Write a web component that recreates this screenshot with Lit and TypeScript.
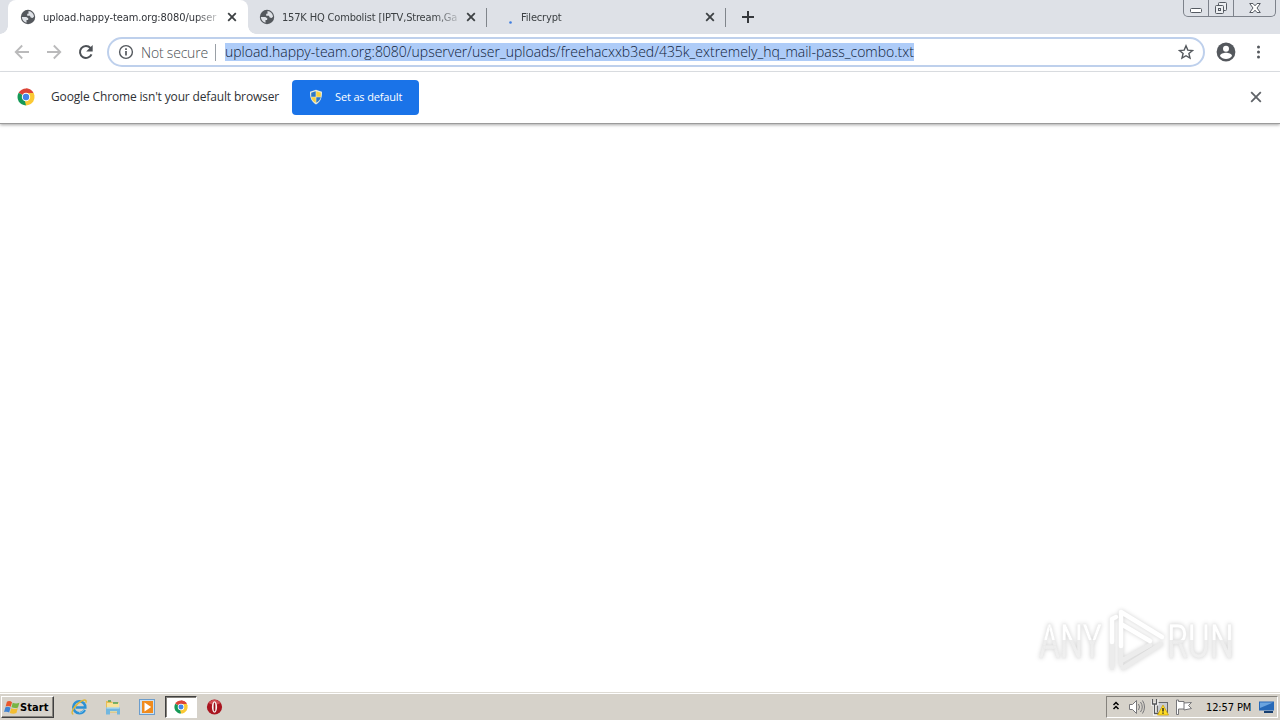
import { LitElement, css, html, svg } from "lit";
import { customElement, property } from "lit/decorators.js";
import { classMap } from "lit/directives/class-map.js";

const globe = html`
  <svg width="16" height="16" viewBox="0 0 16 16">
    <circle cx="8" cy="8" r="7.2" fill="#54585d" />
    <path d="M1.800 8h4.500l2 1.300-.2 1.700H6.500v2.800C4 13 2 11 1.800 8z" fill="#dfe2e7" />
    <path d="M8.500 2c3 .3 5.300 2.700 5.500 5.700l-1.500 1.200-1.800-.5-.8-1.700H7.200V4.800h1.300z" fill="#dfe2e7" />
  </svg>
`;

const cross = html`
  <svg width="10" height="10" viewBox="0 0 10 10">
    <path d="M1.200 1.200l7.600 7.600M8.800 1.200l-7.600 7.600" stroke="#3c4043" stroke-width="1.800" />
  </svg>
`;

const chrome = html`
  <svg width="18" height="18" viewBox="0 0 18 18">
    <path d="M9 9L1.640 4.750A8.500 8.500 0 0 1 16.360 4.750z" fill="#dc4437" />
    <path d="M9 9V.5A8.500 8.500 0 0 1 16.360 4.750H9z" fill="#dc4437" />
    <path d="M9 9L16.360 4.750A8.500 8.500 0 0 1 9 17.500z" fill="#fbc934" />
    <path d="M9 9V17.500A8.500 8.500 0 0 1 1.640 4.750z" fill="#159957" />
    <path d="M9 5h7.500l.8 2.500L12.500 11 9 17.500l-1-4z" fill="#fbc934" />
    <circle cx="9" cy="9" r="4.200" fill="#fff" />
    <circle cx="9" cy="9" r="3.200" fill="#4285e8" />
  </svg>
`;

@customElement("browser-tab")
export class BrowserTab extends LitElement {
  @property() label = "";
  @property({ type: Boolean }) active = false;
  @property({ type: Boolean }) loading = false;

  static styles = css`
    :host {
      display: block;
      height: 34px;
    }
    .tab {
      position: relative;
      display: flex;
      align-items: center;
      box-sizing: border-box;
      height: 34px;
      width: 239px;
      padding-left: 11px;
      color: #3c4043;
      font: 11px "DejaVu Sans Condensed", "DejaVu Sans", sans-serif;
      font-stretch: condensed;
      border-right: 1px solid transparent;
    }
    .tab.active {
      width: 240px;
      padding-left: 12px;
      background: #fff;
      border-radius: 8px 8px 0 0;
      color: #303338;
    }
    .tab.active::before,
    .tab.active::after {
      content: "";
      position: absolute;
      bottom: 0;
      width: 8px;
      height: 8px;
    }
    .tab.active::before {
      left: -8px;
      background: radial-gradient(circle at 0 0, transparent 7.5px, #fff 8px);
    }
    .tab.active::after {
      right: -9px;
      background: radial-gradient(circle at 100% 0, transparent 7.5px, #fff 8px);
    }
    .icon {
      width: 16px;
      height: 16px;
      margin-right: 7px;
    }
    .icon svg {
      display: block;
    }
    .label {
      width: 175px;
      height: 18px;
      line-height: 19px;
      margin-right: 9px;
      overflow: hidden;
      white-space: nowrap;
      letter-spacing: -0.17px;
      -webkit-mask-image: linear-gradient(90deg, #000 152px, transparent 182px);
    }
    .active .label {
      letter-spacing: -0.08px;
    }
    .close {
      display: flex;
    }
    .divider {
      position: absolute;
      right: -1px;
      top: 8px;
      width: 1px;
      height: 19px;
      background: #80858b;
    }
  `;

  render() {
    return html`
      <div class=${classMap({ tab: true, active: this.active })}>
        <div class="icon">
          ${this.loading
            ? html`<svg width="16" height="16"><circle cx="12.500" cy="13.500" r="1.300" fill="#3f7de0" /></svg>`
            : globe}
        </div>
        <div class="label">${this.label}</div>
        <div class="close">${cross}</div>
        ${this.active ? "" : html`<div class="divider"></div>`}
      </div>
    `;
  }
}

@customElement("window-buttons")
export class WindowButtons extends LitElement {
  static styles = css`
    :host {
      display: block;
    }
    .buttons {
      display: flex;
      box-sizing: border-box;
      width: 93px;
      height: 17px;
      border: 1px solid #7d828b;
      border-top: 0;
      border-radius: 0 0 5px 5px;
    }
    .button {
      display: flex;
      align-items: center;
      justify-content: center;
      width: 24px;
      border-right: 1px solid #7d828b;
    }
    .button:last-child {
      flex: 1;
      border-right: 0;
    }
  `;

  render() {
    return html`
      <div class="buttons">
        <div class="button">
          <svg width="12" height="16"><rect x=".5" y="8.500" width="11" height="4" rx="1" fill="#fff" stroke="#555a62" /></svg>
        </div>
        <div class="button">
          <svg width="14" height="14" fill="#eceef1" stroke="#555a62">
            <rect x="4.500" y="1.500" width="8" height="8" rx="1" />
            <rect x="1.500" y="4.500" width="8" height="8" rx="1" />
            <rect x="4.500" y="7.500" width="2" height="2" />
          </svg>
        </div>
        <div class="button">
          <svg width="12" height="12" viewBox="0 0 12 12">
            <path d="M.7 1.500h3.300L6 3.800l2-2.300h3.300L8 6l3.300 4.500H8L6 8.200l-2 2.300H.7L4 6z" fill="#fff" stroke="#555a62" />
          </svg>
        </div>
      </div>
    `;
  }
}

@customElement("address-toolbar")
export class AddressToolbar extends LitElement {
  static styles = css`
    .toolbar {
      display: flex;
      align-items: center;
      box-sizing: border-box;
      height: 38px;
      padding: 0 14px 1px;
      background: #fff;
      border-bottom: 1px solid #dcdfe3;
    }
    .nav {
      display: flex;
      gap: 16px;
      margin-right: 13px;
    }
    .omnibox {
      display: flex;
      align-items: center;
      box-sizing: border-box;
      width: 1098px;
      height: 30px;
      padding: 0 9px;
      border: 2px solid #bed0ec;
      border-radius: 15px;
      font: 14px "Open Sans", "Noto Sans", sans-serif;
      font-weight: 300;
      white-space: nowrap;
    }
    .info {
      display: flex;
      margin-right: 7px;
    }
    .state {
      width: 74px;
      line-height: 17px;
      color: #4b4f54;
      letter-spacing: -0.2px;
    }
    .bar {
      width: 1px;
      height: 17px;
      margin-right: 9px;
      background: #9aa0a6;
    }
    .url {
      height: 18px;
      line-height: 17px;
      background: #aeccf8;
      color: #101c38;
      letter-spacing: -0.01px;
    }
    .star {
      display: flex;
      margin-left: auto;
    }
    .profile {
      display: flex;
      margin: 0 20px 0 11px;
    }
  `;

  render() {
    return html`
      <div class="toolbar">
        <div class="nav">
          <svg width="16" height="16" fill="none" stroke="#bababb" stroke-width="1.800">
            <path d="M15 8H2M8.200 1.500L1.700 8l6.500 6.500" />
          </svg>
          <svg width="16" height="16" fill="none" stroke="#bababb" stroke-width="1.800">
            <path d="M1 8h13M7.800 1.500L14.300 8l-6.500 6.500" />
          </svg>
          <svg width="16" height="16">
            <path d="M13.500 10.300A6 6 0 1 1 12.500 4l1 1" fill="none" stroke="#4d5156" stroke-width="2" />
            <path d="M14.700 1v6.500H8.200z" fill="#4d5156" />
          </svg>
        </div>
        <div class="omnibox">
          <div class="info">
            <svg width="16" height="16">
              <circle cx="8" cy="8" r="6.400" fill="none" stroke="#54585d" stroke-width="1.400" />
              <path d="M8 7v4.500M8 4.300v1.700" stroke="#54585d" stroke-width="1.700" />
            </svg>
          </div>
          <div class="state">Not secure</div>
          <div class="bar"></div>
          <div class="url">upload.happy-team.org:8080/upserver/user_uploads/freehacxxb3ed/435k_extremely_hq_mail-pass_combo.txt</div>
          <div class="star">
            <svg width="16" height="16">
              <path
                d="M8 1.800l1.800 4.300 4.700.4-3.600 3 1.100 4.600L8 11.700l-4 2.400 1.100-4.600-3.600-3 4.700-.4z"
                fill="none"
                stroke="#54585d"
                stroke-width="1.400"
              />
            </svg>
          </div>
        </div>
        <div class="profile">
          <svg width="20" height="20">
            <circle cx="10" cy="10" r="9.400" fill="#54585d" />
            <circle cx="10" cy="6.700" r="3" fill="#fff" />
            <path d="M4 14c0-2.300 3.700-3.300 6-3.300s6 1 6 3.300c-1.300 1.900-3.500 3-6 3s-4.700-1.100-6-3z" fill="#fff" />
          </svg>
        </div>
        <svg width="4" height="16" fill="#54585d">
          <circle cx="2.500" cy="3" r="1.500" />
          <circle cx="2.500" cy="8" r="1.500" />
          <circle cx="2.500" cy="13" r="1.500" />
        </svg>
      </div>
    `;
  }
}

@customElement("default-infobar")
export class DefaultInfobar extends LitElement {
  static styles = css`
    .infobar {
      display: flex;
      align-items: center;
      box-sizing: border-box;
      height: 51px;
      padding: 0 18px 1px 17px;
      background: #fff;
      box-shadow: 0 1px 0 #9b9b9b, 0 2px 3px rgba(0, 0, 0, 0.35);
      font: 12px "Open Sans", "Noto Sans", sans-serif;
      color: #2f3236;
      white-space: nowrap;
    }
    .logo {
      display: flex;
      margin-right: 16px;
    }
    .message {
      width: 241px;
      padding-bottom: 1px;
      letter-spacing: -0.15px;
    }
    .default {
      display: flex;
      align-items: center;
      box-sizing: border-box;
      width: 127px;
      height: 35px;
      margin-top: 1px;
      padding: 0 0 1px 16px;
      gap: 11px;
      border-radius: 4px;
      background: #1a73e8;
      color: #fff;
      font-size: 11px;
      letter-spacing: -0.15px;
    }
    .default span {
      padding-bottom: 2px;
    }
    .close {
      display: flex;
      margin-left: auto;
    }
  `;

  render() {
    return html`
      <div class="infobar">
        <div class="logo">${chrome}</div>
        <div class="message">Google Chrome isn't your default browser</div>
        <div class="default">
          <svg width="16" height="16">
            <path d="M8 .8l6 2C14.300 9 12.300 13 8 15.400 3.700 13 1.700 9 2 2.800z" fill="#e5e9dc" />
            <path d="M7.700 2.200v5.600H3.200V3.700z" fill="#2d78c5" />
            <path d="M8.300 2.200l4.500 1.500v4.100H8.300z" fill="#f8d13c" />
            <path d="M3.200 8.300h4.500v5.500C5 12.300 3.700 10.500 3.200 8.300z" fill="#f8d13c" />
            <path d="M8.300 8.300h4.500c-.5 2.200-1.800 4-4.500 5.500z" fill="#2d78c5" />
          </svg>
          <span>Set as default</span>
        </div>
        <div class="close">
          <svg width="12" height="12"><path d="M1.200 1.200l9.600 9.600M10.800 1.200L1.200 10.800" stroke="#5f6368" stroke-width="1.800" /></svg>
        </div>
      </div>
    `;
  }
}

@customElement("task-bar")
export class TaskBar extends LitElement {
  static styles = css`
    .taskbar {
      display: flex;
      align-items: center;
      box-sizing: border-box;
      height: 28px;
      padding: 1px 2px 0 1px;
      background: #d6d2ca;
      border-top: 1px solid #dedbd4;
      box-shadow: inset 0 1px 0 #fff;
      font: 11px "DejaVu Sans Condensed", "DejaVu Sans", sans-serif;
      font-stretch: condensed;
      color: #000;
    }
    .start {
      display: flex;
      align-items: center;
      box-sizing: border-box;
      width: 53px;
      height: 22px;
      padding-left: 1px;
      border: 1px solid;
      border-color: #fff #404040 #404040 #fff;
      box-shadow: inset -1px -1px 0 #87847e;
      font-weight: bold;
      letter-spacing: 0.1px;
    }
    .launch {
      display: flex;
      align-items: center;
      margin-left: 8px;
    }
    .item {
      display: flex;
      align-items: center;
      justify-content: center;
      box-sizing: border-box;
      width: 34px;
      height: 22px;
    }
    .item.pressed {
      width: 32px;
      margin: 0 1px;
      background: #fff;
      border: 1px solid;
      border-color: #404040 #fff #fff #404040;
      box-shadow: inset 1px 1px 0 #85827c;
    }
    .item.pressed svg {
      width: 14px;
      height: 14px;
    }
    .tray {
      display: flex;
      align-items: center;
      box-sizing: border-box;
      width: 172px;
      height: 22px;
      margin-left: auto;
      padding-left: 5px;
      border: 1px solid;
      border-color: #85827c #fff #fff #85827c;
    }
    .tray svg {
      flex: none;
    }
    .speaker {
      margin: 0 5px 0 8px;
    }
    .flag {
      margin-left: 1px;
    }
    .clock {
      width: 53px;
      margin-left: 12px;
      letter-spacing: -0.12px;
      white-space: nowrap;
    }
  `;

  render() {
    const chevron = (y: number) => svg`<path d="M1.500 ${y}l2.500-2.500 2.500 2.500" />`;
    return html`
      <div class="taskbar">
        <div class="start">
          <svg width="17" height="16" viewBox="0 0 15 15">
            <path d="M3.200 2.500C5 1.500 6.800 2 8 3L6.800 7.300C5.300 6.300 3.700 6.200 2 7z" fill="#e9572b" />
            <path d="M8.600 3.400c2 .9 4 1 6.300.1l-1.300 4.400c-2 .8-4 .7-6.100-.2z" fill="#78b544" />
            <path d="M1.800 7.800c1.700-.8 3.400-.6 4.800.3l-1.300 4.600C3.900 11.700 2.200 11.600.5 12.300z" fill="#3f83d2" />
            <path d="M7.200 8.600c2 .9 4 1 6.200.1l-1.300 4.500c-2 .9-4.200.9-6.200-.1z" fill="#f3bd31" />
          </svg>
          <span>Start</span>
        </div>
        <div class="launch">
          <div class="item">
            <svg width="18" height="18" fill="none">
              <path d="M14.800 11.800C13.700 14 11.700 15.200 9.300 15.200a6 6 0 1 1 6-5.700H5.500" stroke="#2c91d5" stroke-width="2.600" />
              <path d="M14 11.800C12.500 14 11 14.700 9 14.700" stroke="#78c5ef" />
              <path d="M3.300 16.300C-.5 15.500 4.800 6.300 12.300 2.700c3.600-1.600 4.500 0 3.500 2.200" stroke="#dfb738" stroke-width="1.400" />
            </svg>
          </div>
          <div class="item">
            <svg width="18" height="18">
              <path d="M2 3h5l1.500 1.500H15v10H2z" fill="#e7bd55" />
              <path d="M3 5h12v9H3z" fill="#f8e39a" />
              <path d="M4 3h3M9 5h5" stroke="#50a25a" stroke-width="1.300" />
              <path d="M2 9.500h14v7h-3v-3.300H6v3.300H2z" fill="#72b7df" />
              <path d="M2.500 10h13" stroke="#c4e7f6" />
            </svg>
          </div>
          <div class="item">
            <svg width="18" height="18">
              <rect x="1.500" y="1.500" width="15" height="15" fill="#cde1f0" stroke="#6c9dcc" />
              <rect x="4" y="3" width="11" height="12" fill="#f08b1d" />
              <path d="M6.500 4.500v9L13.200 9z" fill="#fff" />
            </svg>
          </div>
          <div class="item pressed">${chrome}</div>
          <div class="item">
            <svg width="18" height="18">
              <circle cx="8.500" cy="9" r="7.600" fill="#a91520" />
              <path d="M2.500 5a7.300 7.300 0 0 1 12 0c-3 2-9 2-12 0z" fill="#cf4c52" />
              <ellipse cx="8.500" cy="9" rx="2.600" ry="5.700" fill="#f9f3f2" />
              <ellipse cx="8.500" cy="9" rx=".9" ry="4.500" fill="#9b121b" />
            </svg>
          </div>
        </div>
        <div class="tray">
          <svg width="8" height="12" fill="none" stroke="#000" stroke-width="1.500">${chevron(4)}${chevron(8)}</svg>
          <svg class="speaker" width="18" height="18" fill="none">
            <path d="M1.500 6.500h3l4-4v13l-4-4h-3z" fill="#fff" stroke="#77777a" />
            <path d="M10.500 6q2 3 0 6M12.500 4q3.500 5 0 10M14.500 2.500q4 6.500 0 13" stroke="#77777a" />
          </svg>
          <svg width="18" height="18">
            <rect x="6.500" y="4.500" width="10" height="10" fill="#c8cbd0" stroke="#65676b" />
            <path d="M1 1.500v4.500h5V1.500M3.500 6v10h5" fill="none" stroke="#fff" stroke-width="3" />
            <path d="M1.500 1v5h4V1M3.500 6v9.500h6" fill="none" stroke="#55575a" stroke-width="1.300" />
            <path d="M12 7l5.500 10h-11z" fill="#ffdc24" stroke="#c79c00" stroke-width=".7" />
            <path d="M12 10v3.500M12 14.500v1.300" stroke="#222" stroke-width="1.400" />
          </svg>
          <svg class="flag" width="24" height="18">
            <path d="M6.500 2v14.500h2V11H14v1l7.500-1.500-3-3 3-3L14 5V3.500H8.500V2z" fill="#fff" stroke="#77777a" />
            <path d="M14 5v6" stroke="#77777a" />
          </svg>
          <div class="clock">12:57 PM</div>
          <svg width="16" height="14">
            <path d="M0 1.500h15v9H0z" fill="#2669b8" />
            <path d="M1 2.500h13L1 8z" fill="#6aa4df" />
            <path d="M5 11h9v2H5z" fill="#173f70" />
          </svg>
        </div>
      </div>
    `;
  }
}

@customElement("any-run-mark")
export class AnyRunMark extends LitElement {
  static styles = css`
    .mark {
      display: block;
      font-family: Roboto, "Liberation Sans", sans-serif;
      filter: drop-shadow(0 0 2px rgba(0, 0, 0, 0.18));
    }
    .word {
      font-size: 49px;
      font-weight: 400;
    }
  `;

  render() {
    return html`
      <svg class="mark" width="230" height="80" viewBox="0 0 230 80">
        <defs>
          <linearGradient id="fade" gradientUnits="userSpaceOnUse" x1="0" y1="20" x2="0" y2="59">
            <stop offset="0" stop-color="#fff" />
            <stop offset=".5" stop-color="#fff" />
            <stop offset=".52" stop-color="#ededed" />
            <stop offset="1" stop-color="#f0f0f0" />
          </linearGradient>
        </defs>
        <g class="word" fill="url(#fade)" stroke="#e8e8e8" stroke-width=".4">
          <text x="9" y="58" textLength="63" lengthAdjust="spacingAndGlyphs">ANY</text>
          <text x="137" y="58" textLength="67" lengthAdjust="spacingAndGlyphs">RUN</text>
        </g>
        <g fill="none" stroke-linejoin="round" stroke-linecap="round">
          <path d="M82 44v24M91 46v18M93 68l38-24M93 60l27-15" stroke="#ececec" stroke-width="4.500" />
          <path d="M82 42V19l4-2M91 46V12l41 25M91 24l29 17" stroke="#fff" stroke-width="4.500" />
        </g>
      </svg>
    `;
  }
}

@customElement("app-root")
export class AppRoot extends LitElement {
  static styles = css`
    :host {
      display: block;
    }
    .screen {
      position: relative;
      display: flex;
      flex-direction: column;
      width: 1280px;
      height: 720px;
      overflow: hidden;
      background: #fff;
    }
    .strip {
      display: flex;
      height: 34px;
      padding: 0 4px 0 8px;
      background: #dee1e7;
    }
    .new-tab {
      display: flex;
      align-items: center;
      margin-left: 15px;
    }
    window-buttons {
      margin-left: auto;
    }
    .page {
      flex: 1;
    }
    .watermark {
      position: absolute;
      left: 1030px;
      top: 600px;
    }
  `;

  render() {
    return html`
      <div class="screen">
        <div class="strip">
          <browser-tab active label="upload.happy-team.org:8080/upser"></browser-tab>
          <browser-tab label="157K HQ Combolist [IPTV,Stream,Ga"></browser-tab>
          <browser-tab loading label="Filecrypt"></browser-tab>
          <div class="new-tab">
            <svg width="14" height="14"><path d="M7 1v12M1 7h12" stroke="#35383c" stroke-width="2" /></svg>
          </div>
          <window-buttons></window-buttons>
        </div>
        <address-toolbar></address-toolbar>
        <default-infobar></default-infobar>
        <div class="page"></div>
        <task-bar></task-bar>
        <any-run-mark class="watermark"></any-run-mark>
      </div>
    `;
  }
}
